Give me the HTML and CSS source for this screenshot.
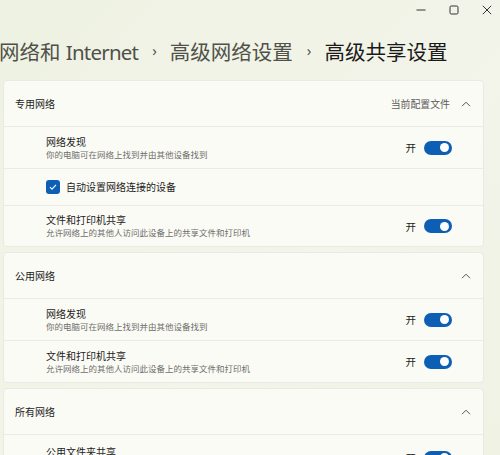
FILE: index.html
```html
<!DOCTYPE html>
<html lang="zh-CN">
<head>
<meta charset="utf-8">
<link rel="stylesheet" href="styles.css">
</head>
<body>
<div class="window">
  <div class="titlebar">
    <div class="ctl"><svg width="10" height="10" viewBox="0 0 10 10"><path d="M0.5 5h9" stroke="#333" stroke-width="1"/></svg></div>
    <div class="ctl"><svg width="10" height="10" viewBox="0 0 10 10"><rect x="1" y="1" width="8" height="8" rx="1.2" fill="none" stroke="#333" stroke-width="1"/></svg></div>
    <div class="ctl"><svg width="10" height="10" viewBox="0 0 10 10"><path d="M0.8 0.8l8.4 8.4M9.2 0.8l-8.4 8.4" stroke="#333" stroke-width="1"/></svg></div>
  </div>
  <div class="crumbs">
    <span class="crumb">网络和 <span class="latin">Internet</span></span>
    <span class="sep">›</span>
    <span class="crumb">高级网络设置</span>
    <span class="sep">›</span>
    <span class="crumb current">高级共享设置</span>
  </div>

  <div class="card">
    <div class="head">
      <span class="head-title">专用网络</span>
      <span class="head-right">当前配置文件</span>
      <svg class="chev" width="10" height="6" viewBox="0 0 10 6"><path d="M1 5.2L5 1.2l4 4" fill="none" stroke="#555" stroke-width="1"/></svg>
    </div>
    <div class="row r42">
      <div class="text"><div class="t">网络发现</div><div class="s">你的电脑可在网络上找到并由其他设备找到</div></div>
      <span class="state">开</span><span class="toggle"><span class="knob"></span></span>
    </div>
    <div class="row r37">
      <span class="check"><svg width="10" height="10" viewBox="0 0 10 10"><path d="M2 5.2l2 2 4-4.4" fill="none" stroke="#fff" stroke-width="1.1"/></svg></span>
      <span class="t">自动设置网络连接的设备</span>
    </div>
    <div class="row r41">
      <div class="text"><div class="t">文件和打印机共享</div><div class="s">允许网络上的其他人访问此设备上的共享文件和打印机</div></div>
      <span class="state">开</span><span class="toggle"><span class="knob"></span></span>
    </div>
  </div>

  <div class="card">
    <div class="head h47">
      <span class="head-title">公用网络</span>
      <svg class="chev" width="10" height="6" viewBox="0 0 10 6"><path d="M1 5.2L5 1.2l4 4" fill="none" stroke="#555" stroke-width="1"/></svg>
    </div>
    <div class="row r42">
      <div class="text"><div class="t">网络发现</div><div class="s">你的电脑可在网络上找到并由其他设备找到</div></div>
      <span class="state">开</span><span class="toggle"><span class="knob"></span></span>
    </div>
    <div class="row r42">
      <div class="text"><div class="t">文件和打印机共享</div><div class="s">允许网络上的其他人访问此设备上的共享文件和打印机</div></div>
      <span class="state">开</span><span class="toggle"><span class="knob"></span></span>
    </div>
  </div>

  <div class="card">
    <div class="head h47">
      <span class="head-title">所有网络</span>
      <svg class="chev" width="10" height="6" viewBox="0 0 10 6"><path d="M1 5.2L5 1.2l4 4" fill="none" stroke="#555" stroke-width="1"/></svg>
    </div>
    <div class="row r42 last">
      <div class="text"><div class="t">公用文件夹共享</div><div class="s">允许网络上的人员访问公用文件夹中的文件</div></div>
      <span class="state">开</span><span class="toggle"><span class="knob"></span></span>
    </div>
  </div>
</div>
</body>
</html>
```

FILE: styles.css
```css
html, body {
  margin: 0;
  padding: 0;
  height: 100%;
  overflow: hidden;
}
body {
  background: linear-gradient(135deg, #eef2e2 0%, #f3f4ea 60%, #f0f2e4 100%);
  font-family: "Noto Sans", "Noto Sans CJK SC", sans-serif;
  color: #1b1b1b;
}
.window {
  width: 500px;
  height: 455px;
  overflow: hidden;
}
.titlebar {
  height: 19px;
  display: flex;
  justify-content: flex-end;
  margin-right: -3px;
}
.ctl {
  width: 33px;
  height: 19px;
  display: flex;
  align-items: center;
  justify-content: center;
}
.crumbs {
  height: 61px;
  display: flex;
  align-items: center;
  box-sizing: border-box;
  padding-top: 2px;
  white-space: nowrap;
  margin-left: -1px;
}
.crumb {
  font-size: 20.5px;
  color: #4f5149;
}
.crumb .latin {
  letter-spacing: -0.8px;
}
.crumb.current {
  color: #1a1a1a;
}
.sep {
  font-size: 15px;
  color: #555;
  margin: 0 13px 0 14px;
  position: relative;
  top: -1px;
}
.card {
  margin-left: 3px;
  width: 481px;
  background: #fbfbf6;
  border: 1px solid #e9eae2;
  border-radius: 4px;
  box-sizing: border-box;
  margin-bottom: 5px;
}
.head {
  height: 45px;
  display: flex;
  align-items: center;
  padding: 0 12px 0 11px;
}
.head.h47 {
  height: 45px;
}
.head-title {
  font-size: 10px;
  flex: 1;
}
.head-right {
  font-size: 9.9px;
  color: #5c5c5c;
  margin-right: 11px;
}
.chev {
  display: block;
}
.row {
  display: flex;
  align-items: center;
  border-top: 1px solid #ebebe4;
  padding: 0 31px 0 42px;
}
.r42 { height: 41px; }
.r37 { height: 36px; }
.r41 { height: 40px; }
.row.last { padding-top: 2px; }
.text {
  flex: 1;
  display: flex;
  flex-direction: column;
}
.t {
  font-size: 10px;
  line-height: 13px;
  color: #1b1b1b;
}
.s {
  font-size: 8.5px;
  line-height: 11px;
  color: #6e6e6a;
}
.state {
  font-size: 10.5px;
  margin-right: 8px;
}
.toggle {
  width: 28px;
  height: 14px;
  border-radius: 7px;
  background: #0d5fb5;
  display: flex;
  align-items: center;
  justify-content: flex-end;
  padding-right: 3px;
  box-sizing: border-box;
}
.knob {
  width: 9px;
  height: 9px;
  border-radius: 50%;
  background: #fff;
}
.check {
  width: 14px;
  height: 14px;
  border-radius: 3px;
  background: #0d5fb5;
  display: flex;
  align-items: center;
  justify-content: center;
  margin-right: 6px;
}
.row .check + .t {
  flex: 1;
}
```
